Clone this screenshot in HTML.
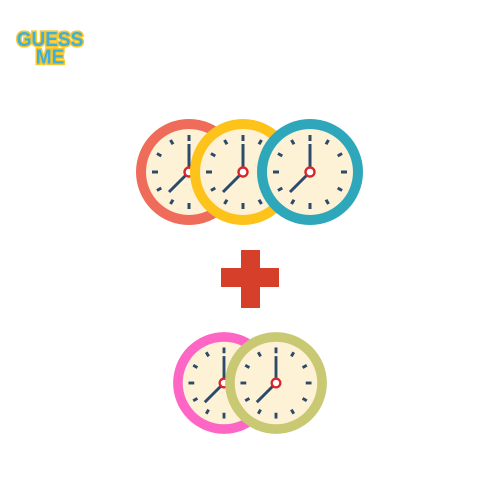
<!DOCTYPE html>
<html><head><style>
html,body{margin:0;padding:0;background:#fff;width:500px;height:500px;overflow:hidden}
.logo{position:absolute;left:12px;top:32px;width:76px;text-align:center;font-family:"Liberation Sans",sans-serif;font-weight:900;font-size:19px;line-height:17px;color:#3cb0e0;-webkit-text-stroke:3px #f6c52a;paint-order:stroke fill;transform:scaleY(1.05)}
</style></head><body>
<div class="logo">GUESS<br>ME</div>
<svg width="500" height="500" style="position:absolute;left:0;top:0">
<defs>
<g id="face">
<circle r="43" fill="#fdf1d6"/>
<g stroke="#2d4a6b" stroke-width="3" stroke-linecap="butt">
<line x1="0" y1="-37" x2="0" y2="-31"/>
<line x1="0" y1="37" x2="0" y2="31"/>
<line x1="-37" y1="0" x2="-31" y2="0"/>
<line x1="37" y1="0" x2="31" y2="0"/>
<g transform="rotate(30)"><line x1="0" y1="-37" x2="0" y2="-32"/><line x1="0" y1="37" x2="0" y2="32"/><line x1="-37" y1="0" x2="-32" y2="0"/><line x1="37" y1="0" x2="32" y2="0"/></g>
<g transform="rotate(60)"><line x1="0" y1="-37" x2="0" y2="-32"/><line x1="0" y1="37" x2="0" y2="32"/><line x1="-37" y1="0" x2="-32" y2="0"/><line x1="37" y1="0" x2="32" y2="0"/></g>
<line x1="0" y1="0" x2="0" y2="-28"/>
<line x1="0" y1="0" x2="-20" y2="20"/>
</g>
<circle r="4.5" fill="#fff" stroke="#d6262e" stroke-width="2.4"/>
</g>
</defs>
<g transform="translate(189,172)"><circle r="53" fill="#ef6b5a"/><use href="#face"/></g>
<g transform="translate(243,172)"><circle r="53" fill="#fec31a"/><use href="#face"/></g>
<g transform="translate(310,172)"><circle r="53" fill="#2ea7bb"/><use href="#face"/></g>
<rect x="241" y="250" width="19" height="58" fill="#d63f29"/>
<rect x="221" y="268" width="58" height="19" fill="#d63f29"/>
<g transform="translate(224,383) scale(0.96)"><circle r="53" fill="#fe66c6"/><use href="#face"/></g>
<g transform="translate(276,383) scale(0.96)"><circle r="53" fill="#c9c873"/><use href="#face"/></g>
</svg>
</body></html>
